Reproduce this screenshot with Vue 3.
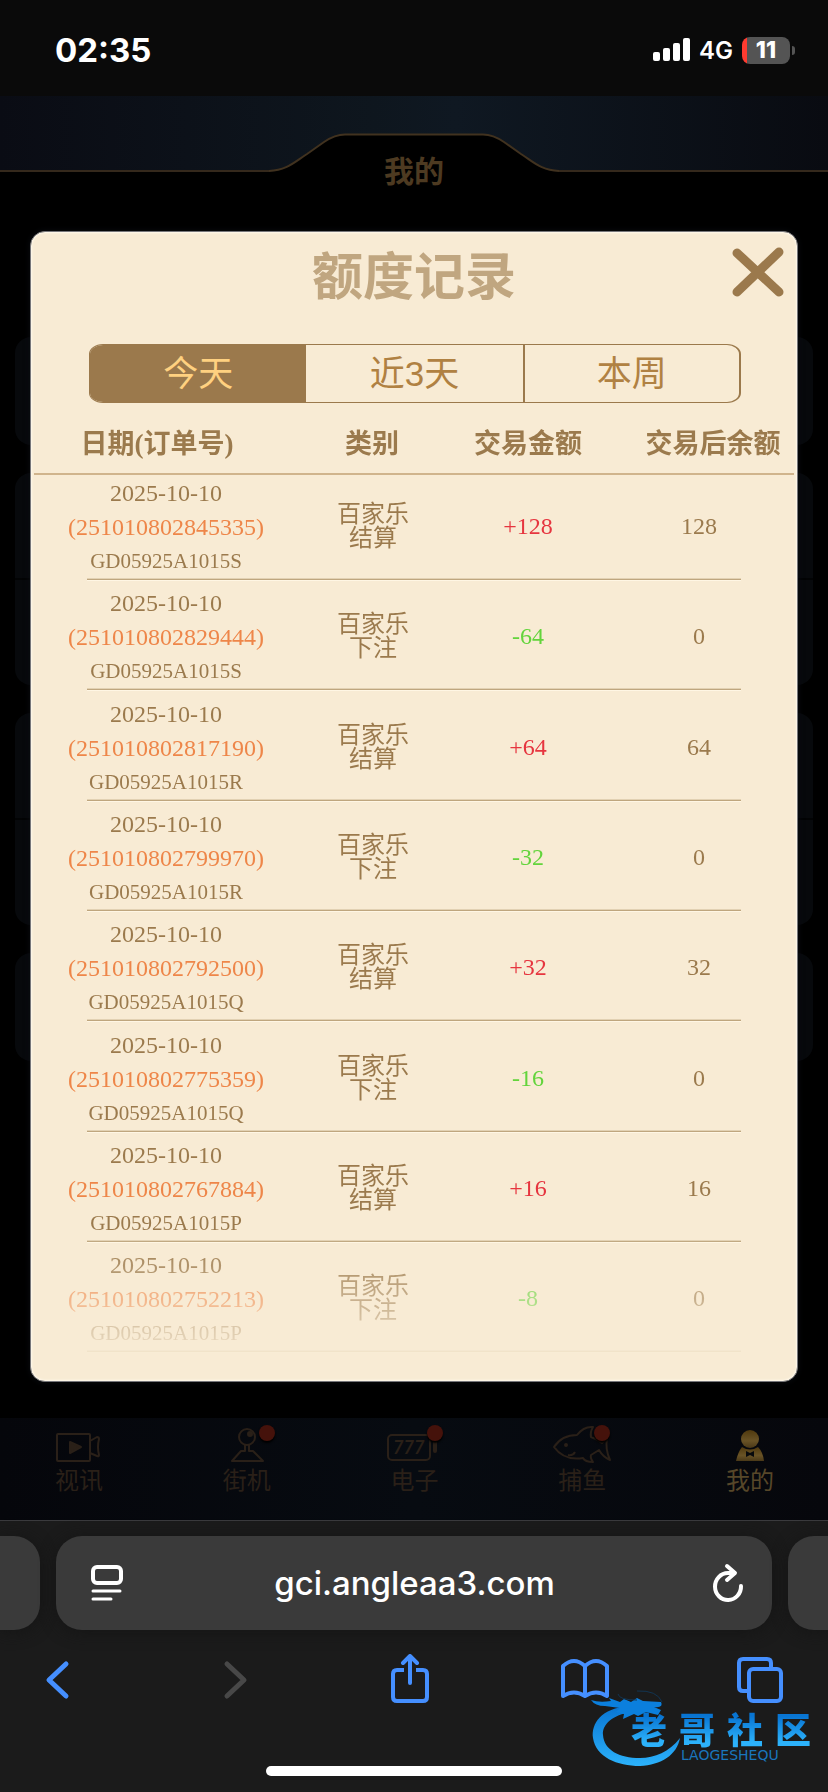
<script setup>
import { ref } from 'vue'

const ranges = ['今天', '近3天', '本周']
const activeRange = ref(0)

const records = [
  { order: '251010802845335', game: 'GD05925A1015S', kind: '结算', amount: '+128', balance: '128' },
  { order: '251010802829444', game: 'GD05925A1015S', kind: '下注', amount: '-64', balance: '0' },
  { order: '251010802817190', game: 'GD05925A1015R', kind: '结算', amount: '+64', balance: '64' },
  { order: '251010802799970', game: 'GD05925A1015R', kind: '下注', amount: '-32', balance: '0' },
  { order: '251010802792500', game: 'GD05925A1015Q', kind: '结算', amount: '+32', balance: '32' },
  { order: '251010802775359', game: 'GD05925A1015Q', kind: '下注', amount: '-16', balance: '0' },
  { order: '251010802767884', game: 'GD05925A1015P', kind: '结算', amount: '+16', balance: '16' },
  { order: '251010802752213', game: 'GD05925A1015P', kind: '下注', amount: '-8', balance: '0' },
]
</script>

<template>
  <div class="screen">
    <div class="status">
      <span class="clock">02:35</span>
      <div class="indicators">
        <svg class="signal" width="37" height="24" viewBox="0 0 37 24" fill="#fff" aria-hidden="true">
          <rect x="0" y="14" width="7" height="9" rx="2" />
          <rect x="10" y="10" width="7" height="13" rx="2" />
          <rect x="20" y="5" width="7" height="18" rx="2" />
          <rect x="30" y="0" width="7" height="23" rx="2" />
        </svg>
        <span class="network">4G</span>
        <div class="battery"><span>11</span></div>
      </div>
    </div>

    <header class="topbar">
      <div class="band">
        <div class="edge"></div>
        <svg width="290" height="76" viewBox="0 0 290 76" aria-hidden="true">
          <path d="M0 76V74.500C18 74 24 67 38 58L55 46Q66 38.500 76 38.500H214Q224 38.500 235 46L252 58C266 67 272 74 290 74.500V76Z" fill="#000" />
          <path d="M0 75C18 74 24 67 38 58L55 46Q66 38.500 76 38.500H214Q224 38.500 235 46L252 58C266 67 272 74 290 75" fill="none" stroke="#41321f" stroke-width="2" />
        </svg>
        <div class="edge"></div>
      </div>
      <h1>我的</h1>
    </header>

    <main class="stage">
      <div class="backdrop" aria-hidden="true">
        <div class="card"></div>
        <div class="card tall"></div>
        <div class="card tall"></div>
        <div class="card"></div>
      </div>

      <section class="dialog" role="dialog" aria-labelledby="dialog-title">
        <div class="dialog-head">
          <h2 id="dialog-title">额度记录</h2>
          <button class="close" type="button" aria-label="关闭">
            <svg width="54" height="52" viewBox="0 0 54 52" fill="none" stroke="#9b794c" stroke-width="9" stroke-linecap="round">
              <path d="M6 7 48 46M48 6 6 46" />
            </svg>
          </button>
        </div>

        <div class="ranges">
          <button
            v-for="(range, i) in ranges"
            :key="range"
            type="button"
            :class="{ active: activeRange === i }"
            :aria-pressed="activeRange === i"
            @click="activeRange = i"
          >{{ range }}</button>
        </div>

        <table>
          <colgroup>
            <col class="c-date" /><col class="c-kind" /><col class="c-amount" /><col class="c-balance" />
          </colgroup>
          <thead>
            <tr>
              <th scope="col">日期(订单号)</th>
              <th scope="col">类别</th>
              <th scope="col">交易金额</th>
              <th scope="col">交易后余额</th>
            </tr>
          </thead>
          <tbody>
            <tr v-for="r in records" :key="r.order">
              <td class="order">
                <div>2025-10-10</div>
                <div class="number">({{ r.order }})</div>
                <div class="game">{{ r.game }}</div>
              </td>
              <td class="kind">百家乐<br />{{ r.kind }}</td>
              <td class="money" :class="r.amount[0] === '+' ? 'plus' : 'minus'">{{ r.amount }}</td>
              <td class="money">{{ r.balance }}</td>
            </tr>
          </tbody>
        </table>
      </section>
    </main>

    <nav class="menu">
      <a href="#">
        <svg width="60" height="40" viewBox="0 0 60 40" fill="none" stroke="currentColor" stroke-width="2" stroke-linejoin="round">
          <rect x="8" y="10" width="33" height="27" rx="1" />
          <path d="M41 17 48 13Q50 13 50 15Q48 23 50 31Q50 33 48 32L41 29" />
          <path d="M21 18V29L32 23Z" fill="currentColor" />
        </svg>
        <span>视讯</span>
      </a>
      <a href="#">
        <svg width="60" height="40" viewBox="0 0 60 40" fill="none" stroke="currentColor" stroke-width="2" stroke-linejoin="round">
          <circle cx="30" cy="13" r="8" />
          <circle cx="33" cy="10" r="2" fill="currentColor" />
          <path d="M28 21V27H24L15 37H46L36 27H32V21" />
        </svg>
        <i class="badge"></i>
        <span>街机</span>
      </a>
      <a href="#">
        <svg width="60" height="40" viewBox="0 0 60 40" fill="none" stroke="currentColor" stroke-width="2">
          <rect x="3" y="11" width="42" height="25" rx="4" />
          <path d="M50 16V27" stroke-width="4" stroke-linecap="round" />
          <text x="8" y="30" font-size="18" font-weight="700" font-style="italic" font-family="Lato, sans-serif" fill="currentColor" stroke="none">777</text>
        </svg>
        <i class="badge"></i>
        <span>电子</span>
      </a>
      <a href="#">
        <svg width="60" height="40" viewBox="0 0 60 40" fill="none" stroke="currentColor" stroke-width="2" stroke-linejoin="round">
          <path d="M2 23Q10 11 25 11Q32 2 41 3Q38 8 39 13Q45 15 50 19L55 14Q53 25 58 36Q51 33 47 26L39 31Q38 34 41 38Q33 38 31 34Q12 37 2 23Z" />
          <path d="M16 31Q21 32 23 28" />
          <circle cx="14" cy="21" r="1" fill="currentColor" />
        </svg>
        <i class="badge"></i>
        <span>捕鱼</span>
      </a>
      <a href="#" class="current" aria-current="page">
        <svg width="60" height="40" viewBox="0 0 60 40">
          <defs>
            <linearGradient id="gold" x1="0" y1="0" x2="0" y2="1">
              <stop offset="0" stop-color="#4f390e" />
              <stop offset="0.6" stop-color="#695326" />
              <stop offset="1" stop-color="#4a3918" />
            </linearGradient>
          </defs>
          <circle cx="30" cy="15" r="9" fill="url(#gold)" />
          <path d="M22 23Q30 28 38 23Q43 28 44 37H16Q18 28 22 23Z" fill="url(#gold)" />
          <path d="M26 27 30 29 34 27V33L30 31 26 33Z" fill="#07090c" />
        </svg>
        <span>我的</span>
      </a>
    </nav>

    <footer class="browser">
      <div class="tabstrip">
        <div class="peek left"></div>
        <div class="address">
          <button type="button" aria-label="页面设置">
            <svg width="34" height="38" viewBox="0 0 34 38" fill="none" stroke="#fff" stroke-width="3" stroke-linecap="round">
              <rect x="3" y="3" width="28" height="16" rx="4" stroke-width="4" />
              <path d="M3 27H30M3 35H21" />
            </svg>
          </button>
          <span class="url">gci.angleaa3.com</span>
          <button type="button" aria-label="重新载入">
            <svg width="34" height="40" viewBox="0 0 34 40" fill="none" stroke="#fff" stroke-width="4" stroke-linecap="round" stroke-linejoin="round">
              <path d="M30 23A13 13.500 0 1 1 17 10H23M16 3 24 10 16 17" />
            </svg>
          </button>
        </div>
        <div class="peek right"></div>
      </div>

      <div class="tools">
        <button type="button" aria-label="后退">
          <svg width="48" height="52" viewBox="0 0 48 52"><path d="M31 10 14 26 31 42" /></svg>
        </button>
        <button type="button" aria-label="前进" class="off">
          <svg width="48" height="52" viewBox="0 0 48 52"><path d="M17 10 34 26 17 42" /></svg>
        </button>
        <button type="button" aria-label="分享">
          <svg width="48" height="52" viewBox="0 0 48 52" class="fine">
            <path d="M18 16H11Q7 16 7 20V43Q7 47 11 47H37Q41 47 41 43V20Q41 16 37 16H30" stroke-linecap="butt" />
            <path d="M24 29V3M17 9 24 2 31 9" />
          </svg>
        </button>
        <button type="button" aria-label="书签">
          <svg width="48" height="52" viewBox="0 0 48 52" class="fine">
            <path d="M24 12Q13 2 2 12V42Q13 35 24 42Q35 35 46 42V12Q35 2 24 12V42" />
          </svg>
        </button>
        <button type="button" aria-label="标签页">
          <svg width="48" height="52" viewBox="0 0 48 52" class="fine">
            <path d="M11 37H7Q3 37 3 33V9Q3 5 7 5H31Q35 5 35 9V13" stroke-linecap="butt" />
            <rect x="13" y="15" width="32" height="32" rx="4" />
          </svg>
        </button>
      </div>
      <div class="home"></div>

      <div class="brand">
        <svg width="96" height="80" viewBox="0 0 96 80" aria-hidden="true">
          <defs>
            <linearGradient id="sea" x1="0" y1="0" x2="0" y2="1">
              <stop offset="0" stop-color="#0874d2" />
              <stop offset="1" stop-color="#2cb2fb" />
            </linearGradient>
          </defs>
          <path d="M40 18C12 20 2 36 4 50C7 69 28 78 51 78C72 77 88 67 91 50C80 64 66 70 51 70C30 70 15 62 14 47C13 36 24 27 42 24Z" fill="url(#sea)" />
          <path d="M2 12Q10 15 22 13L20 10 31 14 35 11 42 14 48 10 54 13 72 14Q75 20 65 19L72 22 69 27 57 24 49 28 45 26 34 31 35 26 27 24 31 20 16 18Q6 18 2 12Z" fill="#0b7fdd" />
          <path d="M29 6Q30 12 48 12M48 3Q68 2 73 14" fill="none" stroke="#123451" stroke-width="1" />
        </svg>
        <div class="brand-text">
          <strong><span>老</span><span>哥</span><span>社</span><span>区</span></strong>
          <small>LAOGESHEQU</small>
        </div>
      </div>
    </footer>
  </div>
</template>

<style>
body {
  background: #000;
}
</style>

<style scoped>
.screen {
  display: flex;
  flex-direction: column;
  min-height: 100vh;
  overflow: hidden;
  background: #000;
  font-family: Inter, "Noto Sans CJK SC", sans-serif;
}
.screen * {
  box-sizing: border-box;
}
button {
  padding: 0;
  border: 0;
  background: none;
  font: inherit;
  color: inherit;
}
svg {
  display: block;
}
h1,
h2 {
  margin: 0;
}

.status {
  display: flex;
  align-items: center;
  justify-content: space-between;
  height: 96px;
  padding: 4px 34px 0 55px;
  background: #0a0a0a;
  color: #fff;
}
.clock {
  font-size: 33px;
  font-weight: 700;
}
.indicators {
  display: flex;
  align-items: center;
  gap: 9px;
}
.network {
  font-size: 24px;
  font-weight: 600;
}
.battery {
  position: relative;
  width: 48px;
  height: 27px;
  margin-right: 4px;
  border-radius: 8px;
  background: linear-gradient(90deg, #ff3b30 5px, #545454 5px);
  font-size: 23px;
  font-weight: 800;
  line-height: 27px;
  text-align: center;
}
.battery::after {
  content: "";
  position: absolute;
  left: 50px;
  top: 9px;
  width: 3px;
  height: 9px;
  border-radius: 0 4px 4px 0;
  background: #545454;
}

.topbar {
  display: grid;
  height: 135px;
}
.band,
.topbar h1 {
  grid-area: 1 / 1;
}
.band {
  display: flex;
  height: 76px;
  background: linear-gradient(90deg, #0a0c14, #0e161e 45%, #0f1822 55%, #090b11);
}
.edge {
  flex: 1;
  border-bottom: 2px solid #35291c;
}
.topbar h1 {
  padding-top: 58px;
  color: #4d3a21;
  font-size: 30px;
  font-weight: 700;
  line-height: 34px;
  text-align: center;
}

.stage {
  position: relative;
  flex: 1;
  padding: 0 30px 36px;
}
.backdrop {
  position: absolute;
  inset: 106px 15px 0;
  display: flex;
  flex-direction: column;
  gap: 28px;
}
.card {
  height: 108px;
  border-radius: 16px;
  background: #07090c;
}
.card.tall {
  height: 212px;
  background: linear-gradient(#07090c 105px, #020304 105px 107px, #07090c 107px);
}
.dialog {
  position: relative;
  padding: 0 3px 28px;
  border: 1px solid #77777a;
  border-radius: 15px;
  background: #f8ebd4;
  box-shadow: inset 0 0 2px 1px #fff9ec, 0 0 6px #0a0d12;
}
.dialog-head {
  display: grid;
  grid-template-columns: 1fr auto 1fr;
  height: 112px;
  padding: 14px 9px 0;
}
.dialog-head h2 {
  grid-column: 2;
  color: #c0a680;
  font-size: 51px;
  font-weight: 700;
  line-height: 62px;
}
.close {
  justify-self: end;
  align-self: start;
}
.ranges {
  display: grid;
  grid-template-columns: repeat(3, 1fr);
  height: 59px;
  margin: 0 53px 0 55px;
  border: 1px solid #9b794c;
  border-right-width: 2px;
  border-radius: 14px / 10px;
  overflow: hidden;
}
.ranges button {
  color: #b08142;
  font-family: "Liberation Sans", "Noto Sans CJK SC", sans-serif;
  font-size: 35px;
  font-weight: 400;
  line-height: 57px;
}
.ranges button + button + button {
  border-left: 2px solid #9b794c;
}
.ranges .active {
  background: #9b794c;
  color: #ffd180;
}

table {
  width: 100%;
  border-collapse: collapse;
  table-layout: fixed;
  color: #9b7a4d;
  font-family: "Liberation Serif", "Noto Sans CJK SC", serif;
  font-size: 24px;
  text-align: center;
  mask-image: linear-gradient(to top, rgba(0, 0, 0, 0.1), #000 116px);
}
.c-date {
  width: 35%;
}
.c-kind {
  width: 20%;
}
.c-amount {
  width: 20%;
}
.c-balance {
  width: 25%;
}
thead tr {
  height: 72px;
  background: linear-gradient(#d0b48c, #d0b48c) bottom / 100% 2px no-repeat;
}
th {
  padding: 10px 0 0;
  font-size: 27px;
  font-weight: 700;
  line-height: 36px;
  white-space: nowrap;
}
th:first-child {
  padding-right: 20px;
}
th:nth-child(2) {
  padding-right: 8px;
}
th:last-child {
  padding-left: 28px;
}
tbody tr {
  height: 110px;
  background: linear-gradient(#e2d1b3 1px, #bfa67e 1px 2px, #fff6e4 2px) bottom / calc(100% - 106px) 3px no-repeat;
}
tbody tr:first-child {
  height: 106px;
}
tbody tr:nth-child(3n) {
  height: 111px;
}
td {
  padding: 0 2px 3px 0;
  vertical-align: bottom;
  line-height: 34px;
}
.number {
  color: #ee8649;
}
.game {
  font-size: 21px;
}
.kind {
  padding-right: 6px;
  padding-bottom: 31px;
  line-height: 24px;
}
.money {
  padding-right: 0;
  padding-bottom: 38px;
}
.plus {
  color: #e6353f;
}
.minus {
  color: #63d43c;
}

.menu {
  display: flex;
  justify-content: space-between;
  height: 102px;
  padding: 6px 28px 0 29px;
  background: linear-gradient(90deg, #05060b, #070b11 50%, #06070c);
}
.menu a {
  position: relative;
  display: flex;
  flex-direction: column;
  align-items: center;
  width: 100px;
  color: #2a2018;
  font-family: "Noto Sans CJK SC", sans-serif;
  font-size: 24px;
  font-weight: 400;
  line-height: 30px;
  text-decoration: none;
}
.menu .current {
  color: #574729;
}
.badge {
  position: absolute;
  left: 62px;
  top: 1px;
  width: 16px;
  height: 16px;
  border-radius: 50%;
  background: #45120b;
  box-shadow: 0 2px 2px #000;
}

.browser {
  position: relative;
  height: 272px;
  border-top: 1px solid #3a3a3d;
  background: #1b1b1b;
}
.tabstrip {
  display: flex;
  gap: 16px;
  padding-top: 15px;
}
.peek,
.address {
  height: 94px;
  background: #3a3a3a;
  box-shadow: 0 2px 16px #151515;
}
.peek {
  width: 40px;
}
.left {
  border-radius: 0 26px 26px 0;
}
.right {
  border-radius: 26px 0 0 26px;
}
.address {
  flex: 1;
  display: flex;
  align-items: center;
  justify-content: space-between;
  padding: 0 27px 0 34px;
  border-radius: 26px;
  color: #fff;
  font-size: 33px;
  font-weight: 500;
}
.url {
  padding-right: 6px;
}
.tools {
  display: flex;
  justify-content: space-between;
  padding: 24px 44px 0 35px;
}
.tools svg {
  fill: none;
  stroke: #458fff;
  stroke-width: 5;
  stroke-linecap: round;
  stroke-linejoin: round;
}
.tools .fine {
  stroke-width: 4;
}
.tools .off svg {
  stroke: #484848;
}
.home {
  width: 296px;
  height: 10px;
  margin: 60px auto 0;
  border-radius: 5px;
  background: #fff;
}
.brand {
  position: absolute;
  right: 17px;
  bottom: 24px;
  display: flex;
  align-items: flex-end;
}
.brand-text {
  width: 180px;
  margin-left: -54px;
  padding-bottom: 6px;
  font-family: "Noto Sans CJK SC", sans-serif;
}
.brand strong {
  display: flex;
  justify-content: space-between;
  background: linear-gradient(#0874d2 8px, #2cb2fb 34px);
  background-clip: text;
  color: transparent;
  font-size: 36px;
  font-weight: 900;
  line-height: 40px;
}
.brand small {
  display: block;
  padding-left: 50px;
  color: #1a76bd;
  font-family: "DejaVu Sans", sans-serif;
  font-size: 14px;
  line-height: 14px;
}
</style>
